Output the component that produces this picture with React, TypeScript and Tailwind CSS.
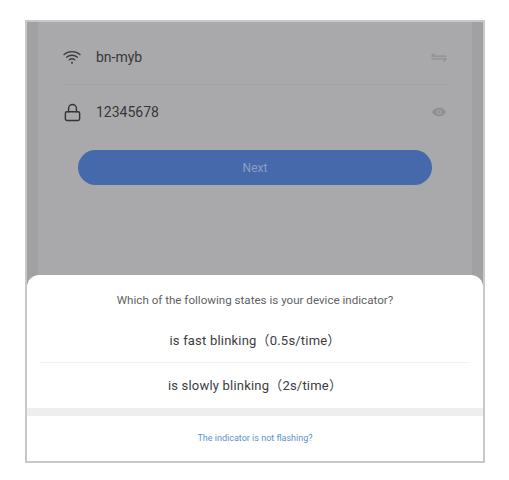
import { Lock } from 'lucide-react'

function WifiIcon() {
  return (
    <svg width="18" height="15" viewBox="0 0 18 15" fill="none" stroke="#3a3b3f" strokeWidth="1.3" strokeLinecap="round">
      <path d="M1 4.6C5.5 .6 12.5 .6 17 4.6" />
      <path d="M3.6 7.2C6.7 4.6 11.3 4.6 14.4 7.2" />
      <path d="M6.2 9.8C7.9 8.5 10.1 8.5 11.8 9.8" />
      <circle cx="9" cy="12.8" r="1" fill="#3a3b3f" stroke="none" />
    </svg>
  )
}

function SwapIcon() {
  return (
    <svg width="16" height="11" viewBox="0 0 16 11" fill="none" stroke="#8e8e91" strokeWidth="1.2">
      <path d="M0.5 4.2H15.5M0.5 4.2L3.5 1.4" />
      <path d="M0.5 6.8H15.5M15.5 6.8L12.5 9.6" />
    </svg>
  )
}

function EyeIcon() {
  return (
    <svg width="14" height="10" viewBox="0 0 14 10" fill="#8e8e91">
      <path d="M0 5C3 -.6 11 -.6 14 5C11 10.6 3 10.6 0 5Z" />
      <circle cx="7" cy="5" r="2.6" fill="#a6a6a9" />
      <circle cx="7" cy="5" r="1.4" />
    </svg>
  )
}

export default function App() {
  return (
    <div className="w-[509px] h-[480px] bg-white pt-[20px] pl-[25px] font-['Roboto','Noto_Sans_CJK_SC',sans-serif]">
      <div className="w-[460px] h-[443px] flex flex-col border-2 border-[#c8c8ca] bg-[#a1a1a4]">
        <div className="h-[265px] mx-[11px] bg-[#a9a9ac] px-[25px] shrink-0">
          <div className="h-[63px] pt-[9px] flex items-center border-b border-[#a3a3a6]">
            <span className="w-[33px] shrink-0 flex"><WifiIcon /></span>
            <span className="text-[14px] text-[#36373b]">bn-myb</span>
            <span className="ml-auto flex"><SwapIcon /></span>
          </div>
          <div className="h-[54px] flex items-center">
            <span className="w-[33px] shrink-0 flex"><Lock size={19} color="#333438" strokeWidth={1.8} /></span>
            <span className="text-[14px] text-[#36373b]">12345678</span>
            <span className="ml-auto mr-[1px] flex"><EyeIcon /></span>
          </div>
          <div className="mt-[11px] mx-[15px] h-[35px] rounded-full bg-[#4669ac] flex items-center justify-center text-[12px] text-[#8c9fc4]">
            Next
          </div>
        </div>
        <div className="flex-1 -mt-[12px] rounded-t-[12px] bg-white flex flex-col relative">
          <div className="h-[51px] flex items-center justify-center text-[11.6px] text-[#5f5f62]">
            Which of the following states is your device indicator?
          </div>
          <div className="mx-[13px] h-[37px] pb-[6px] flex items-center justify-center text-[13px] tracking-[0.2px] text-[#3c3c3f] border-b border-[#f1f1f1]">
            is fast blinking（0.5s/time）
          </div>
          <div className="h-[45px] flex items-center justify-center text-[13px] tracking-[0.2px] text-[#3c3c3f]">
            is slowly blinking（2s/time）
          </div>
          <div className="h-[8px] bg-[#eeeeee]" />
          <div className="flex-1 flex items-center justify-center text-[9px] text-[#5a93c9]">
            The indicator is not flashing?
          </div>
        </div>
      </div>
    </div>
  )
}
